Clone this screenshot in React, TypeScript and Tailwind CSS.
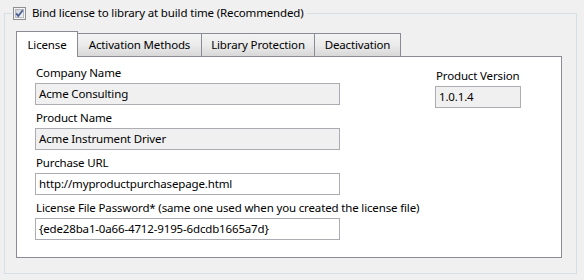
import React from 'react';

const font = { fontFamily: '"Noto Sans", "Liberation Sans", sans-serif' };

function CheckBox() {
  return (
    <svg width="13" height="13" viewBox="0 0 13 13" className="shrink-0">
      <defs>
        <linearGradient id="cbg" x1="0" y1="0" x2="1" y2="1">
          <stop offset="0" stopColor="#cbcfd5" />
          <stop offset="1" stopColor="#f7f7f7" />
        </linearGradient>
      </defs>
      <rect x="0.5" y="0.5" width="12" height="12" fill="#f4f4f4" stroke="#8e8f8f" />
      <rect x="2.5" y="2.5" width="8" height="8" fill="url(#cbg)" stroke="#b4b9bf" />
      <path d="M3.2 6.4 L5.2 9 L9.8 3.2" fill="none" stroke="#4a5f97" strokeWidth="1.8" />
    </svg>
  );
}

function Field({ label, value, readOnly, width }: { label: string; value: string; readOnly?: boolean; width: string }) {
  return (
    <div className="flex flex-col">
      <div className="h-[16px] leading-[16px] pl-px whitespace-nowrap">{label}</div>
      <div
        className={
          'mt-[2px] h-[22px] border border-[#abadb3] pl-[3px] flex items-center whitespace-nowrap ' +
          width +
          (readOnly ? ' bg-[#f0f0f0]' : ' bg-white')
        }
      >
        {value}
      </div>
    </div>
  );
}

const tabs = [
  { label: 'Activation Methods', w: 'w-[125px]' },
  { label: 'Library Protection', w: 'w-[114px]' },
  { label: 'Deactivation', w: 'w-[87px]' },
];

export default function App() {
  return (
    <div
      className="w-[584px] h-[280px] bg-[#f0f0f0] pt-[5px] pl-[4px] overflow-hidden text-[11.5px] tracking-[-0.15px] text-black"
      style={font}
    >
      <fieldset className="w-[573px] h-[269px] border border-[#d5dfe5]">
        <legend className="ml-[7px] pl-px pr-[3px] h-[16px] flex items-center gap-[6px]">
          <CheckBox />
          <span className="leading-[16px]">Bind license to library at build time (Recommended)</span>
        </legend>

        <div className="pt-[10px] pl-[11px]">
          {/* tab strip */}
          <div className="flex items-end h-[25px]">
            <div className="relative z-10 w-[62px] h-[26px] -mb-px bg-white border border-b-0 border-[#898c95] flex items-center justify-center">
              License
            </div>
            {tabs.map((t) => (
              <div
                key={t.label}
                className={
                  '-ml-px h-[23px] border border-b-0 border-[#898c95] bg-linear-to-b from-[#f3f3f3] via-[#ebebeb] to-[#d8d8d8] flex items-center justify-center ' +
                  t.w
                }
              >
                {t.label}
              </div>
            ))}
          </div>

          {/* tab page */}
          <div className="w-[546px] h-[202px] border border-[#898c95] bg-white flex pt-[8px] pl-[18px]">
            <div className="flex flex-col gap-[5px] w-[400px]">
              <Field label="Company Name" value="Acme Consulting" readOnly width="w-[305px]" />
              <Field label="Product Name" value="Acme Instrument Driver" readOnly width="w-[305px]" />
              <Field label="Purchase URL" value="http://myproductpurchasepage.html" width="w-[305px]" />
              <Field
                label="License File Password* (same one used when you created the license file)"
                value="{ede28ba1-0a66-4712-9195-6dcdb1665a7d}"
                width="w-[305px]"
              />
            </div>
            <div className="pt-[3px]">
              <Field label="Product Version" value="1.0.1.4" readOnly width="w-[86px]" />
            </div>
          </div>
        </div>
      </fieldset>
    </div>
  );
}
